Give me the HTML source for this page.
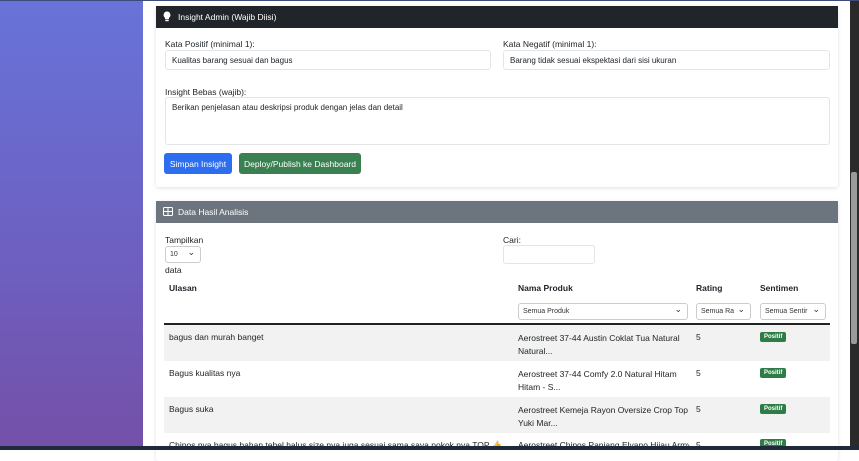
<!DOCTYPE html>
<html><head><style>
*{box-sizing:border-box;margin:0;padding:0}
body{width:859px;height:450px;overflow:hidden;position:relative;font-family:"Liberation Sans",sans-serif;font-size:8.5px;color:#212529;background:#fff}
.side{position:absolute;left:0;top:0;width:143px;height:450px;background:linear-gradient(180deg,#6873d8 0%,#6c62c4 50%,#7450a8 100%)}
.main{position:absolute;left:143px;top:0;width:707px;height:450px;background:#fff}
.sb{position:absolute;left:850px;top:0;width:9px;height:450px;background:#2a2a2a}
.thumb{position:absolute;left:851px;top:172px;width:6px;height:172px;background:#9a9a9a;border-radius:2px}
.bot{position:absolute;left:0;top:446px;width:859px;height:4px;background:#1c2a3a}
.topb{position:absolute;left:0;top:0;width:859px;height:1px;background:#3d4a7a}
.a{position:absolute;white-space:nowrap}
.card{position:absolute;left:156px;width:682px;border-radius:3px;box-shadow:0 1px 4px rgba(0,0,0,.12);background:#fff}
.hd{position:absolute;left:156px;width:682px;height:22px;color:#fff;font-size:8.5px;padding:6px 0 0 22px}
.in{position:absolute;border:1px solid #e3e5e8;border-radius:3px;background:#fff;padding:5px 6px;font-size:8px}
.btn{position:absolute;color:#fff;border-radius:3px;font-size:8.5px;text-align:center;padding-top:6px;height:21px}
.sel{position:absolute;border:1px solid #ccc;border-radius:3px;height:17px;font-size:7px;padding:4px 4px;color:#333;overflow:hidden}
.sel:after{content:"⌄";position:absolute;right:5px;top:0px;font-size:9px}
.row{position:absolute;left:164px;width:666px;height:36px}
.badge{position:absolute;background:#2e7d46;color:#fff;font-size:6px;font-weight:bold;border-radius:2px;padding:2px 4px}
b{font-weight:bold}
</style></head><body>
<div class="side"></div><div class="main"></div>
<div class="card" style="top:6px;height:181px"></div>
<div class="hd" style="top:6px;background:#212529">Insight Admin (Wajib Diisi)</div>
<svg class="a" style="left:163px;top:11px" width="8" height="11" viewBox="0 0 8 11"><path d="M4 0.5a3.5 3.5 0 0 0-2 6.3V8h4V6.8A3.5 3.5 0 0 0 4 .5z" fill="#fff"/><rect x="2.3" y="8.6" width="3.4" height="1.6" fill="#fff"/></svg>
<div class="a" style="left:165px;top:39px">Kata Positif (minimal 1):</div>
<div class="in" style="left:165px;top:50px;width:326px;height:20px">Kualitas barang sesuai dan bagus</div>
<div class="a" style="left:503px;top:39px">Kata Negatif (minimal 1):</div>
<div class="in" style="left:503px;top:50px;width:327px;height:20px">Barang tidak sesuai ekspektasi dari sisi ukuran</div>
<div class="a" style="left:165px;top:87px">Insight Bebas (wajib):</div>
<div class="in" style="left:165px;top:97px;width:665px;height:48px">Berikan penjelasan atau deskripsi produk dengan jelas dan detail</div>
<div class="btn" style="left:164px;top:153px;width:68px;background:#2d6ef0">Simpan Insight</div>
<div class="btn" style="left:239px;top:153px;width:122px;background:#3a8050">Deploy/Publish ke Dashboard</div>

<div class="card" style="top:201px;height:260px"></div>
<div class="hd" style="top:201px;background:#6c757d">Data Hasil Analisis</div>
<svg class="a" style="left:163px;top:207px" width="10" height="9" viewBox="0 0 10 9"><rect x=".5" y=".5" width="9" height="8" rx="1" fill="none" stroke="#fff"/><path d="M.5 4.5h9M5 .5v8" stroke="#fff"/></svg>
<div class="a" style="left:165px;top:235px">Tampilkan</div>
<div class="sel" style="left:165px;top:246px;width:36px">10</div>
<div class="a" style="left:165px;top:265px">data</div>
<div class="a" style="left:503px;top:235px">Cari:</div>
<div class="in" style="left:503px;top:245px;width:92px;height:19px"></div>
<div class="a" style="left:169px;top:283px"><b>Ulasan</b></div>
<div class="a" style="left:518px;top:283px"><b>Nama Produk</b></div>
<div class="a" style="left:696px;top:283px"><b>Rating</b></div>
<div class="a" style="left:760px;top:283px"><b>Sentimen</b></div>
<div class="sel" style="left:518px;top:303px;width:170px">Semua Produk</div>
<div class="sel" style="left:696px;top:303px;width:55px">Semua Ra</div>
<div class="sel" style="left:760px;top:303px;width:66px">Semua Sentir</div>
<div class="a" style="left:164px;top:323px;width:666px;height:2px;background:#222"></div>
<div class="row" style="top:325px;background:#f2f2f2"></div>
<div class="row" style="top:397px;background:#f2f2f2"></div>
<div class="a" style="left:169px;top:332px">bagus dan murah banget</div>
<div class="a" style="left:518px;top:332px;line-height:13px">Aerostreet 37-44 Austin Coklat Tua Natural<br>Natural...</div>
<div class="a" style="left:696px;top:332px">5</div><div class="badge" style="left:760px;top:332px">Positif</div>
<div class="a" style="left:169px;top:368px">Bagus kualitas nya</div>
<div class="a" style="left:518px;top:368px;line-height:13px">Aerostreet 37-44 Comfy 2.0 Natural Hitam<br>Hitam - S...</div>
<div class="a" style="left:696px;top:368px">5</div><div class="badge" style="left:760px;top:368px">Positif</div>
<div class="a" style="left:169px;top:404px">Bagus suka</div>
<div class="a" style="left:518px;top:404px;line-height:13px">Aerostreet Kemeja Rayon Oversize Crop Top<br>Yuki Mar...</div>
<div class="a" style="left:696px;top:404px">5</div><div class="badge" style="left:760px;top:404px">Positif</div>
<div class="a" style="left:169px;top:440px;width:334px;overflow:hidden">Chipos nya bagus bahan tebel halus size nya juga sesuai sama saya pokok nya TOP 👍 Jah</div>
<div class="a" style="left:518px;top:440px;width:172px;overflow:hidden">Aerostreet Chipos Panjang Elyano Hijau Army</div>
<div class="a" style="left:696px;top:440px">5</div><div class="badge" style="left:760px;top:439px">Positif</div>
<div class="sb"></div><div class="thumb"></div><div class="topb"></div><div class="bot"></div>
</body></html>
